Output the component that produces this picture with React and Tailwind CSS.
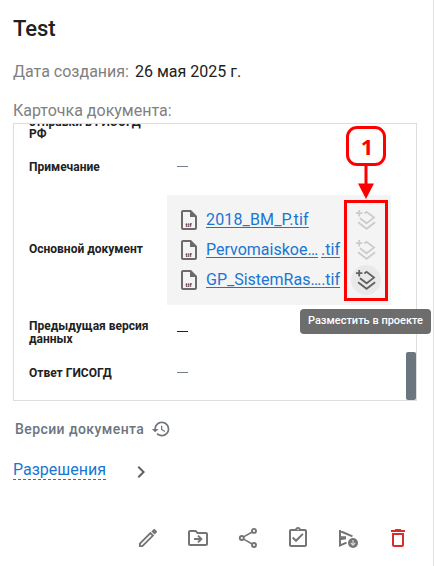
import React from "react";

const svg = "block shrink-0 fill-current";

function FileIcon() {
  return (
    <span className="relative block h-6 w-6 shrink-0 text-[#6b6b6b]">
      <svg viewBox="0 0 24 24" className="block h-6 w-6 fill-current">
        <path d="M14 2H6c-1.100 0-2 .9-2 2v16c0 1.100.9 2 2 2h12c1.100 0 2-.9 2-2V8l-6-6zM6 20V4h7v5h5v11H6z" />
      </svg>
      <span className="absolute left-[8.500px] top-[13px] text-[6px] font-bold leading-[8px] tracking-[0.2px] text-[#3b2f2f]">tif</span>
    </span>
  );
}

function LayersPlus() {
  return (
    <svg viewBox="0 0 24 24" className="block h-6 w-6 fill-none stroke-current" strokeWidth="1.8">
      <path d="M2 5.200h6.400M5.200 2v6.400" />
      <path d="M10.400 5.500L12.600 3.800L20 9.600L12.600 15.300L6 10.200" />
      <path d="M4.100 14.200L12.600 20.800L21.100 14.200" />
    </svg>
  );
}

function Row({ label, children, className }) {
  return (
    <div className={"flex items-center " + className}>
      <div className="w-[138px] shrink-0 pl-[15px] text-[12px] font-bold leading-[13px]">{label}</div>
      <div className="flex-1">{children}</div>
    </div>
  );
}

function Dash({ className }) {
  return <div className={"ml-[25px] h-px w-[11px] " + className} />;
}

function FileRow({ name, ext, active }) {
  return (
    <div className="flex h-[30px] items-center pl-[10px]">
      <FileIcon />
      <div className="ml-[5px] flex w-[134px] justify-between whitespace-nowrap text-[16px] leading-[20px] text-[#1976d2] underline underline-offset-2">
        <span className={ext ? "" : "tracking-[0.15px]"}>{name}</span>
        {ext && <span>{ext}</span>}
      </div>
      <div className={"ml-[11px] flex h-[30px] w-[30px] items-center justify-center rounded-full " + (active ? "bg-[#e9e9e9] text-[#616161]" : "text-[#cccccc]")}>
        <LayersPlus />
      </div>
    </div>
  );
}

export default function App() {
  return (
    <div className="relative h-[566px] w-[434px] overflow-hidden border-r border-[#e0e0e0] bg-white pl-[13px] font-[Roboto,sans-serif] text-[#212121]">
      <h1 className="pt-[16px] text-[22px] font-medium leading-[26px] tracking-[-0.1px]">Test</h1>
      <div className="mt-[20px] flex gap-[6px] text-[16px] leading-[20px]">
        <span className="text-[#808080]">Дата создания:</span>
        <span>26 мая 2025 г.</span>
      </div>
      <div className="mt-[19px] text-[16px] leading-[20px] text-[#808080]">Карточка документа:</div>

      <section className="relative mt-[2px] h-[278px] w-[404px] overflow-hidden border border-[#dedede]">
        <div className="-mt-[10px] flex h-[26px] items-end">
          <div className="w-[145px] pl-[15px] text-[12px] font-bold leading-[12px]">отправки в ГИСОГД РФ</div>
        </div>
        <Row label="Примечание" className="h-[55px]"><Dash className="relative -top-px bg-[#757f8a]" /></Row>
        <Row label={<span className="relative -top-px">Основной документ</span>} className="h-[110px]">
          <div className="ml-[15px] h-[110px] w-[224px] bg-[#f4f4f4] py-[10px]">
            <FileRow name="2018_BM_P.tif" />
            <FileRow name="Pervomaiskoe…" ext=".tif" />
            <FileRow name="GP_SistemRas…" ext=".tif" active />
          </div>
        </Row>
        <Row label="Предыдущая версия данных" className="h-[55px]"><Dash className="relative -top-px bg-[#212121]" /></Row>
        <Row label="Ответ ГИСОГД" className="h-[27px]"><Dash className="relative -top-px bg-[#757f8a]" /></Row>
        <div className="absolute bottom-0 right-0 h-[48px] w-[10px] rounded-[2px] bg-[#6c757d]" />
      </section>

      <div className="mt-[18px] flex h-5 items-center gap-[7px] pl-[2px] text-[14px] font-medium tracking-[0.42px] text-[#6c757d]">
        <span>Версии документа</span>
        <svg viewBox="0 0 24 24" className={svg + " h-5 w-5"}>
          <path d="M13 3c-4.970 0-9 4.030-9 9H1l3.890 3.890.07.140L9 12H6c0-3.870 3.130-7 7-7s7 3.130 7 7-3.130 7-7 7c-1.930 0-3.680-.790-4.940-2.060l-1.420 1.420C8.270 19.990 10.510 21 13 21c4.970 0 9-4.030 9-9s-4.030-9-9-9zm-1 5v5l4.280 2.540.72-1.210-3.500-2.080V8H12z" />
        </svg>
      </div>
      <div className="mt-[20px] flex h-[22px] items-start">
        <a className="border-b border-dashed border-[#1976d2] pt-px text-[16px] leading-[19px] text-[#1976d2]">Разрешения</a>
        <svg viewBox="0 0 24 24" className={svg + " ml-[23px] mt-[1px] h-6 w-6 text-[#616161]"}>
          <path d="M10 6 8.590 7.410 13.170 12l-4.580 4.590L10 18l6-6z" />
        </svg>
      </div>

      <div className="mt-[45px] flex gap-[26px] pl-[123px] text-[#757575]">
        <svg viewBox="0 0 24 24" className={svg + " h-6 w-6"}>
          <path d="M3.900 20.100v-2.500L14.400 7.100l2.500 2.500L6.400 20.100z" fill="none" stroke="currentColor" strokeWidth="1.900" />
          <path d="M15.400 5.400l2.100-2.100c.400-.400 1-.400 1.400 0l1.800 1.800c.400.400.400 1 0 1.400l-2.100 2.100z" />
        </svg>
        <svg viewBox="0 0 24 24" className={svg + " h-6 w-6"}>
          <path d="M20 6h-8l-2-2H4c-1.100 0-2 .9-2 2v12c0 1.100.9 2 2 2h16c1.100 0 2-.9 2-2V8c0-1.100-.9-2-2-2zm0 12H4V6h5.170l2 2H20v10z" />
          <path d="M8 13h7M12 9.600l3.400 3.400-3.400 3.400" fill="none" stroke="currentColor" strokeWidth="1.900" />
        </svg>
        <svg viewBox="0 0 24 24" className="block h-6 w-6 shrink-0 fill-none stroke-current" strokeWidth="1.900">
          <circle cx="5.800" cy="12" r="2" />
          <circle cx="18" cy="4.900" r="2" />
          <circle cx="18" cy="19" r="2" />
          <path d="M7.600 10.900L16.200 6M7.600 13.100L16.200 18" strokeWidth="1.600" />
        </svg>
        <svg viewBox="0 0 24 24" className={svg + " h-6 w-6"}>
          <path d="M19 3h-4.180C14.400 1.840 13.300 1 12 1s-2.400.840-2.820 2H5c-1.100 0-2 .9-2 2v14c0 1.100.9 2 2 2h14c1.100 0 2-.9 2-2V5c0-1.100-.9-2-2-2zm-7-.250c.410 0 .750.340.750.750s-.340.750-.750.750-.750-.340-.750-.750.340-.750.750-.750zM19 19H5V5h14v14zM17.600 8.600l-1.410-1.420-6.190 6.190-2.590-2.580L6 12.200l4 4z" />
        </svg>
        <svg viewBox="0 0 24 24" className={svg + " h-6 w-6"}>
          <path d="M4 5L16.500 10.400M4 4v7.200h6M10 12.300L4 13.200V19.500L10.500 16.600" fill="none" stroke="currentColor" strokeWidth="2" />
          <circle cx="17" cy="17" r="5" />
          <path d="M17 14v5M14.700 16.900L17 19.200L19.300 16.900" fill="none" stroke="#dddddd" strokeWidth="1.100" />
        </svg>
        <svg viewBox="0 0 24 24" className={svg + " h-6 w-6 text-[#d32f2f]"}>
          <path d="M16 9v10H8V9h8m-1.500-6h-5l-1 1H5v2h14V4h-3.500l-1-1zM18 7H6v12c0 1.100.9 2 2 2h8c1.100 0 2-.9 2-2V7z" />
        </svg>
      </div>

      <div className="absolute left-[346px] top-[126px] flex h-[40px] w-[40px] items-center justify-center rounded-[11px] border-[3px] border-[#ff0000] bg-white pl-[2px] font-['Open_Sans',sans-serif] text-[22px] font-bold text-[#ff0000]">1</div>
      <svg viewBox="0 0 16 34" className="absolute left-[358px] top-[165px] h-[34px] w-4 fill-[#ff0000]">
        <path d="M6.500 0h3v18.500H16L8 34 0 18.500h6.500z" />
      </svg>
      <div className="absolute left-[344px] top-[200px] h-[101px] w-[44px] border-[3px] border-[#ff0000]" />
      <div className="absolute left-[300px] top-[309px] flex h-[25px] w-[131px] items-center justify-center whitespace-nowrap rounded-[4px] bg-[#616161]/92 pb-px text-[11px] font-medium text-white">Разместить в проекте</div>
    </div>
  );
}
